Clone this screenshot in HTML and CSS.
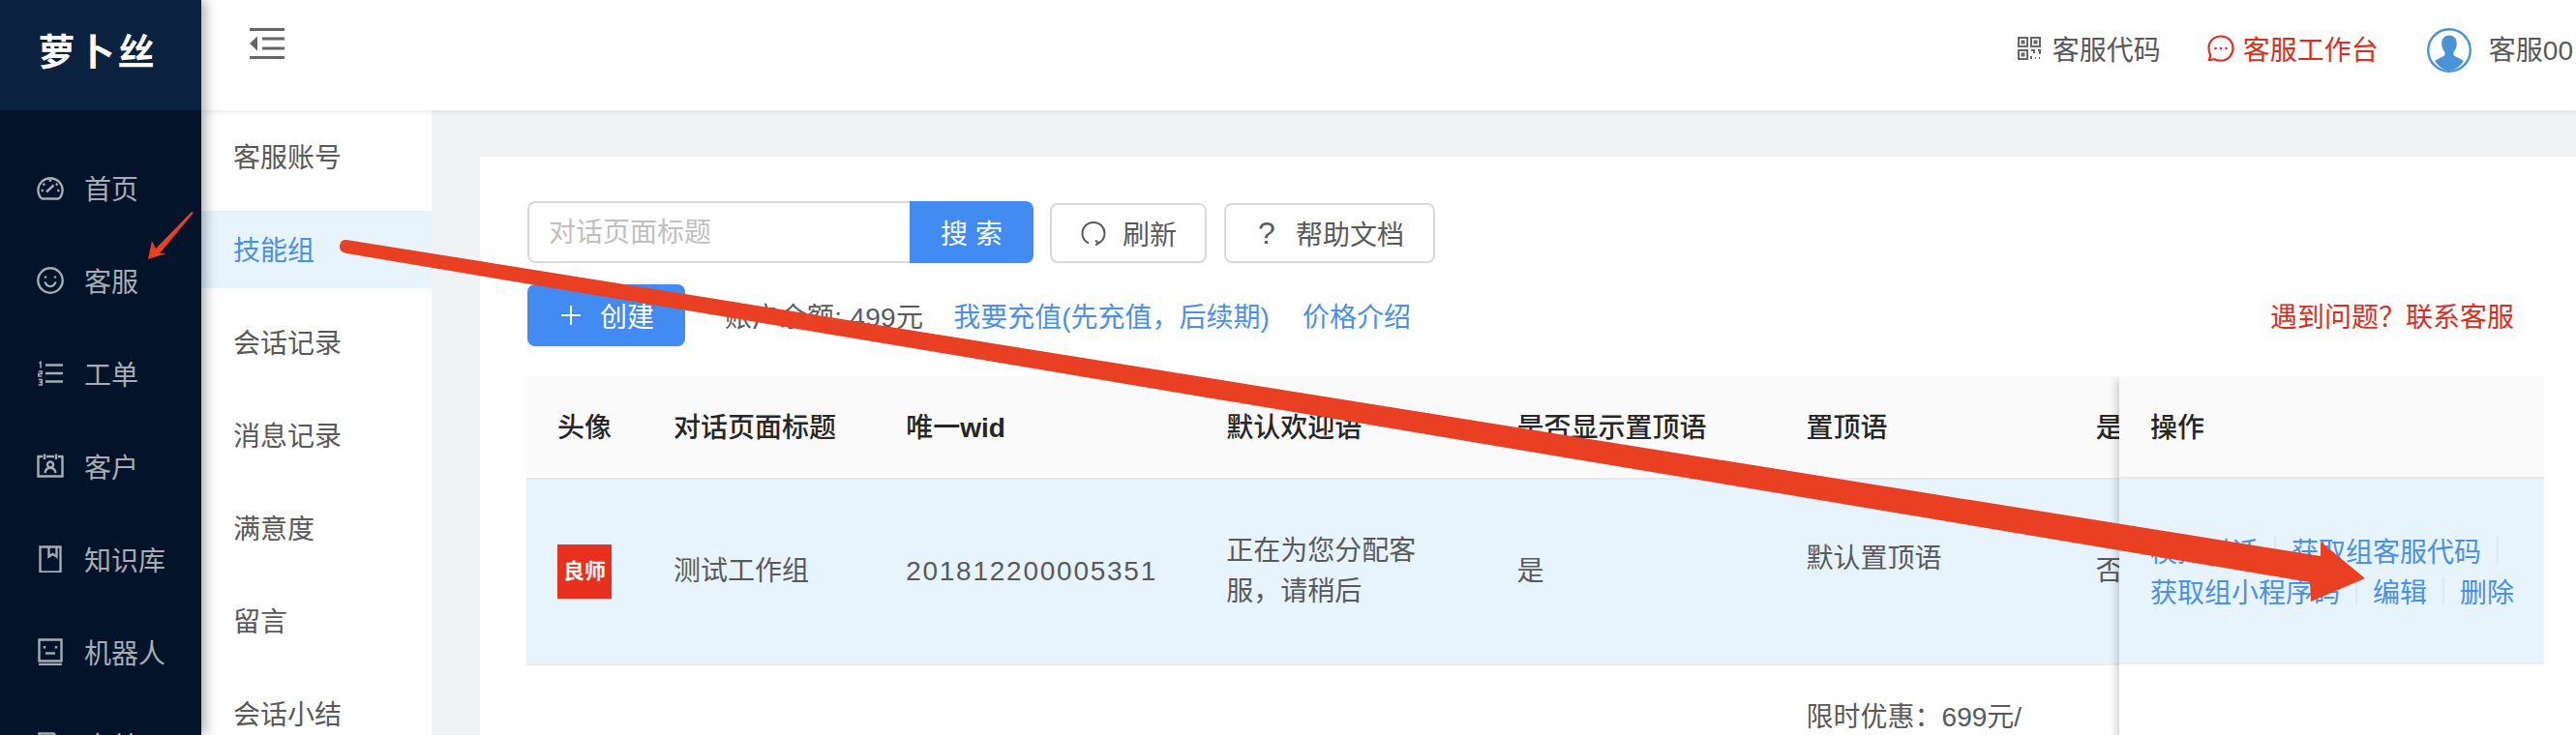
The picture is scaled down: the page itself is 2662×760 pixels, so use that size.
FILE: index.html
```html
<!DOCTYPE html>
<html lang="zh-CN">
<head>
    <meta charset="UTF-8">
    <title>萝卜丝 - 技能组</title>
    <link rel="stylesheet" href="styles.css">
</head>
<body>

    <!-- Main menu -->
    <aside class="sider">
        <div class="logo">萝卜丝</div>
        <nav class="menu">
            <a class="menu-item">
                <svg class="menu-icon" viewBox="0 0 28 28"><path d="M6 25.5h16a3 3 0 0 0 2.2-1.3A12.6 12.6 0 1 0 3.8 24.2 3 3 0 0 0 6 25.5z"/><path d="M10 18.5l7.5-7"/><path d="M14 5.5v2.2M6.5 10l1.8 1.3M4.6 17h2.2M21.5 10l-1.8 1.3M23.4 17h-2.2"/></svg>
                <span>首页</span>
            </a>
            <a class="menu-item">
                <svg class="menu-icon" viewBox="0 0 28 28"><circle cx="14" cy="14" r="12.7"/><path d="M8.5 15.5c1 3.2 3.2 4.6 5.5 4.6s4.500-1.400 5.500-4.600"/><path d="M9 9.500v2M19 9.500v2"/></svg>
                <span>客服</span>
            </a>
            <a class="menu-item">
                <svg class="menu-icon" viewBox="0 0 28 28"><path d="M9 5.500h18M9 14h18M9 22.500h18"/><path class="icon-thin" d="M2.500 3.500l1.500-1v6M1.800 12h3.400v2.500H1.800V17h3.400M1.800 20.500h3.400v5.500H1.800M2.500 23.200h2.700"/></svg>
                <span>工单</span>
            </a>
            <a class="menu-item">
                <svg class="menu-icon" viewBox="0 0 28 28"><path d="M6 4H1.500v20.500h25V4H22M10 4h8"/><path d="M8 1.500V7M20 1.500V7"/><circle cx="14" cy="12.500" r="3"/><path d="M8.500 21c.6-3.500 2.700-5.200 5.500-5.200s4.900 1.700 5.500 5.200"/></svg>
                <span>客户</span>
            </a>
            <a class="menu-item">
                <svg class="menu-icon" viewBox="0 0 28 28"><path d="M3.500 1.500h21v26h-21z"/><path d="M12.500 1.500v10l4-2.500 4 2.500v-10"/></svg>
                <span>知识库</span>
            </a>
            <a class="menu-item">
                <svg class="menu-icon" viewBox="0 0 28 28"><path d="M2.500 1.500h23v22h-23z"/><path d="M2 27h24"/><path d="M9 15.500h10"/><path d="M8 8v2.500M20 8v2.500"/></svg>
                <span>机器人</span>
            </a>
            <a class="menu-item">
                <svg class="menu-icon" viewBox="0 0 28 28"><path d="M2.500 27V2.500h15l3 4h5V27z"/></svg>
                <span>商单</span>
            </a>
        </nav>
    </aside>

    <div class="main">
        <!-- Top bar -->
        <header class="topbar">
            <svg class="fold-icon" viewBox="0 0 36 32"><path d="M0 1.500h36M13 11h23M13 21h23M0 30.500h36"/><path class="fold-arrow" d="M8 8.500v15L0 16z"/></svg>
            <div class="top-actions">
                <a class="top-link">
                    <svg class="qr-icon" viewBox="0 0 24 24"><path d="M1 1h9v9H1zM14 1h9v9h-9zM1 14h9v9H1z"/><path d="M4.500 4.500h2v2h-2zM17.500 4.500h2v2h-2zM4.500 17.500h2v2h-2z"/><path d="M14 14h3v3M21 14h2v4M14 20v3M18 22h1M22 22h1"/></svg>
                    <span>客服代码</span>
                </a>
                <a class="top-link top-link-red">
                    <svg class="chat-icon" viewBox="0 0 28 28"><path d="M14 1.500C6.800 1.500 1.500 6.900 1.500 13.800c0 2.700.7 4.900 1.400 6.500.6 1.500-.3 3.500-.9 5.500 2.200.4 3.900-.4 5.300-.6 1.800.9 4.100 1.400 6.700 1.400 7 0 12.500-5.600 12.500-12.800S21 1.500 14 1.500z"/><circle class="dot" cx="8.500" cy="14" r="1.300"/><circle class="dot" cx="14" cy="14" r="1.300"/><circle class="dot" cx="19.500" cy="14" r="1.300"/></svg>
                    <span>客服工作台</span>
                </a>
                <a class="top-link top-user">
                    <svg class="user-avatar" viewBox="0 0 46 46"><circle class="ring" cx="23" cy="23" r="21.800"/><path class="bust" d="M23 7.500c-5 0-7.800 3.700-7.800 8.500 0 3.200 1 6.200 2.800 8.300.8 1 .8 3-.2 4.200-1.600 1.600-6.300 3-9.700 5.600C12.500 40.500 17.500 44 23 44s10.500-3.500 14.900-9.900c-3.400-2.600-8.100-4-9.700-5.600-1-1.200-1-3.200-.2-4.200 1.800-2.100 2.800-5.100 2.800-8.300 0-4.800-2.800-8.500-7.800-8.500z"/></svg>
                    <span>客服00</span>
                </a>
            </div>
        </header>

        <div class="body">
            <!-- Sub menu -->
            <nav class="subnav">
                <a class="subnav-item">客服账号</a>
                <a class="subnav-item subnav-item-active">技能组</a>
                <a class="subnav-item">会话记录</a>
                <a class="subnav-item">消息记录</a>
                <a class="subnav-item">满意度</a>
                <a class="subnav-item">留言</a>
                <a class="subnav-item">会话小结</a>
            </nav>

            <div class="content">
                <section class="card">
                    <div class="toolbar">
                        <div class="search">
                            <input class="search-input" type="text" placeholder="对话页面标题">
                            <button class="search-button" type="button">搜 索</button>
                        </div>
                        <button class="btn btn-refresh" type="button">
                            <svg class="btn-icon" viewBox="0 0 26 26"><path d="M8 23.500C4 21.500 1.500 17.800 1.500 13.500 1.500 7 6.500 2 13 2s11.500 5 11.500 11.500c0 4.300-2.500 8-6.500 10"/><path d="M15 20.500l3 3-3 2"/></svg>
                            <span>刷新</span>
                        </button>
                        <button class="btn btn-help" type="button">
                            <span class="help-mark">?</span>
                            <span>帮助文档</span>
                        </button>
                    </div>

                    <div class="toolbar-second">
                        <button class="btn-create" type="button">
                            <svg class="plus-icon" viewBox="0 0 20 20"><path d="M10 0v20M0 10h20"/></svg>
                            <span>创建</span>
                        </button>
                        <span class="balance">账户余额: 499元</span>
                        <a class="link link-recharge">我要充值(先充值，后续期)</a>
                        <a class="link link-price">价格介绍</a>
                        <a class="link-help">遇到问题？联系客服</a>
                    </div>

                    <div class="table-wrap">
                        <table class="data-table">
                            <colgroup>
                                <col class="col-avatar">
                                <col class="col-title">
                                <col class="col-wid">
                                <col class="col-welcome">
                                <col class="col-show">
                                <col class="col-top">
                                <col class="col-last">
                            </colgroup>
                            <thead>
                                <tr>
                                    <th>头像</th>
                                    <th>对话页面标题</th>
                                    <th>唯一<b>wid</b></th>
                                    <th>默认欢迎语</th>
                                    <th>是否显示置顶语</th>
                                    <th>置顶语</th>
                                    <th>是否</th>
                                </tr>
                            </thead>
                            <tbody>
                                <tr class="row-selected">
                                    <td><div class="group-avatar">良师</div></td>
                                    <td>测试工作组</td>
                                    <td class="num">201812200005351</td>
                                    <td>正在为您分配客服，请稍后</td>
                                    <td>是</td>
                                    <td><div class="top-text">默认置顶语</div></td>
                                    <td>否</td>
                                </tr>
                                <tr class="row-next">
                                    <td></td>
                                    <td></td>
                                    <td></td>
                                    <td></td>
                                    <td></td>
                                    <td>限时优惠：699元/</td>
                                    <td></td>
                                </tr>
                            </tbody>
                        </table>

                        <!-- Fixed column -->
                        <div class="fixed-col">
                            <div class="fixed-head">操作</div>
                            <div class="fixed-row">
                                <div class="action-line">
                                    <a>模拟对话</a><i class="divider"></i><a>获取组客服代码</a><i class="divider"></i>
                                </div>
                                <div class="action-line">
                                    <a>获取组小程序码</a><i class="divider"></i><a>编辑</a><i class="divider"></i><a>删除</a>
                                </div>
                            </div>
                        </div>
                    </div>
                </section>
            </div>
        </div>
    </div>

    <!-- Red arrows drawn on top of the screenshot -->
    <svg class="markup" viewBox="0 0 2662 760">
        <path d="M358 248 L2398 575 L2398 560 L2444 598 L2388 622 L2387 602 L358 262 Q350 260 351 254 Q352 247 358 248z"/>
        <path d="M200 220 L165 262 L172 262 L153 268 L157 249 L161 257 L198 219z"/>
    </svg>

</body>
</html>
```

FILE: styles.css
```css
/* --- General Setup --- */
:root {
    --primary-color: #418bf3;
    --link-color: #4a8fe9;
    --red-color: #dc2e20;
    --border-color: #d9d9d9;
    --selected-color: #e7f4fe;
}

html, body {
    margin: 0;
    height: 760px;
    overflow: hidden;
}

body {
    position: relative;
    display: flex;
    font-family: "Liberation Sans", "Noto Sans CJK SC", sans-serif;
    font-size: 28px;
    color: #595959;
    background-color: #f0f2f5;
}

/* --- Main Menu --- */
.sider {
    flex: none;
    width: 208px;
    background-color: #031329;
    box-shadow: 4px 0 12px rgba(0, 21, 41, 0.35);
    position: relative;
    z-index: 2;
}

.logo {
    height: 114px;
    box-sizing: border-box;
    padding: 0 6px 14px 0;
    display: flex;
    align-items: center;
    justify-content: center;
    background-color: #0a2140;
    color: #fff;
    font-size: 38px;
    font-weight: 700;
    letter-spacing: 3px;
}

.menu {
    padding-top: 32px;
}

.menu-item {
    height: 96px;
    display: flex;
    align-items: center;
    gap: 21px;
    padding-left: 38px;
    color: #a6adb6;
}

.menu-icon {
    width: 28px;
    height: 28px;
    fill: none;
    stroke: #a6adb6;
    stroke-width: 2.4;
}

.icon-thin {
    stroke-width: 1.6;
}

/* --- Top Bar --- */
.main {
    flex: 1;
    min-width: 0;
    display: flex;
    flex-direction: column;
}

.topbar {
    flex: none;
    height: 114px;
    display: flex;
    align-items: center;
    justify-content: space-between;
    padding-left: 50px;
    background-color: #fff;
    box-shadow: 0 2px 6px rgba(0, 21, 41, 0.08);
    position: relative;
    z-index: 1;
}

.fold-icon {
    width: 36px;
    height: 32px;
    margin-top: -24px;
    fill: none;
    stroke: #666;
    stroke-width: 3;
}

.fold-arrow {
    fill: #666;
    stroke: none;
}

.top-actions {
    display: flex;
    align-items: center;
    margin: 0 3px 14px 0;
}

.top-link {
    display: flex;
    align-items: center;
    white-space: nowrap;
}

.top-link-red {
    margin-left: 48px;
    color: var(--red-color);
}

.top-user {
    margin-left: 50px;
}

.qr-icon {
    width: 24px;
    height: 24px;
    margin-right: 12px;
    fill: none;
    stroke: #666;
    stroke-width: 2;
}

.chat-icon {
    width: 28px;
    height: 28px;
    margin-right: 9px;
    fill: none;
    stroke: var(--red-color);
    stroke-width: 2.2;
}

.dot {
    fill: var(--red-color);
    stroke: none;
}

.user-avatar {
    width: 46px;
    height: 46px;
    margin: 4px 18px 0 0;
}

.ring {
    fill: #fff;
    stroke: #4a93d6;
    stroke-width: 2.4;
}

.bust {
    fill: #4a93d6;
}

/* --- Sub Menu --- */
.body {
    flex: 1;
    display: flex;
    min-height: 0;
}

.subnav {
    flex: none;
    width: 238px;
    padding-top: 8px;
    background-color: #fff;
}

.subnav-item {
    height: 80px;
    box-sizing: border-box;
    margin-bottom: 16px;
    display: flex;
    align-items: center;
    padding: 0 0 2px 33px;
}

.subnav-item-active {
    background-color: var(--selected-color);
    color: var(--link-color);
}

/* --- Content Card --- */
.content {
    flex: 1;
    min-width: 0;
    padding: 48px 0 0 50px;
}

.card {
    height: 100%;
    box-sizing: border-box;
    padding: 46px 33px 0 48px;
    background-color: #fff;
}

.toolbar {
    display: flex;
    align-items: center;
    gap: 18px;
    margin-left: 1px;
}

.search {
    display: flex;
    height: 64px;
    margin-right: -1px;
}

.search-input {
    width: 395px;
    box-sizing: border-box;
    padding: 2px 20px 0;
    border: 2px solid var(--border-color);
    border-right: none;
    border-radius: 8px 0 0 8px;
    outline: none;
    font-family: inherit;
    font-size: 28px;
}

.search-input::placeholder {
    color: #bfbfbf;
}

.search-button {
    width: 128px;
    border: none;
    border-radius: 0 8px 8px 0;
    background-color: var(--primary-color);
    color: #fff;
    font-family: inherit;
    font-size: 28px;
    box-shadow: 0 2px 0 rgba(0, 0, 0, 0.04);
}

.btn {
    height: 62px;
    margin-top: 2px;
    display: flex;
    align-items: center;
    box-sizing: border-box;
    border: 2px solid var(--border-color);
    border-radius: 8px;
    background-color: #fff;
    color: #595959;
    font-family: inherit;
    font-size: 28px;
    box-shadow: 0 2px 0 rgba(0, 0, 0, 0.015);
}

.btn-refresh {
    width: 162px;
    padding-left: 30px;
}

.btn-help {
    width: 218px;
    padding-left: 32px;
}

.btn-icon {
    width: 26px;
    height: 26px;
    margin-right: 17px;
    fill: none;
    stroke: #595959;
    stroke-width: 2;
}

.help-mark {
    width: 20px;
    margin-right: 20px;
    font-size: 32px;
    text-align: center;
}

.toolbar-second {
    display: flex;
    align-items: center;
    margin: 22px 0 0 1px;
    padding-right: 31px;
}

.btn-create {
    width: 163px;
    height: 64px;
    display: flex;
    align-items: center;
    padding: 0 0 0 35px;
    border: none;
    border-radius: 8px;
    background-color: var(--primary-color);
    color: #fff;
    font-family: inherit;
    font-size: 28px;
    box-shadow: 0 2px 0 rgba(0, 0, 0, 0.04);
}

.plus-icon {
    width: 20px;
    height: 20px;
    margin-right: 20px;
    fill: none;
    stroke: #fff;
    stroke-width: 2;
}

.balance {
    margin-left: 41px;
    letter-spacing: 0.3px;
}

.link {
    color: var(--link-color);
}

.link-recharge {
    margin-left: 31px;
}

.link-price {
    margin-left: 34px;
}

.link-help {
    margin-left: auto;
    color: var(--red-color);
}

/* --- Table --- */
.table-wrap {
    position: relative;
    height: 400px;
    margin-top: 31px;
    overflow: hidden;
}

.data-table {
    width: 2090px;
    table-layout: fixed;
    border-collapse: collapse;
}

.col-avatar { width: 120px; }
.col-title { width: 240px; }
.col-wid { width: 331px; }
.col-welcome { width: 300px; }
.col-show { width: 299px; }
.col-top { width: 299px; }
.col-last { width: 500px; }

.data-table th {
    height: 106px;
    padding: 0 32px 3px;
    box-sizing: border-box;
    background-color: #fafafa;
    border-bottom: 2px solid #e8e8e8;
    color: #262626;
    font-weight: 500;
    text-align: left;
    white-space: nowrap;
}

.data-table td {
    padding: 0 32px;
    line-height: 42px;
}

.row-selected td {
    height: 192px;
    box-sizing: border-box;
    background-color: var(--selected-color);
    border-bottom: 2px solid #e8eef2;
}

.row-next td {
    height: 120px;
    padding-top: 33px;
    vertical-align: top;
    white-space: nowrap;
}

.num {
    letter-spacing: 1.75px;
}

.group-avatar {
    width: 56px;
    height: 56px;
    display: flex;
    align-items: center;
    justify-content: center;
    background-color: #e8301f;
    color: #fff;
    font-size: 22px;
    font-weight: 700;
}

.top-text {
    padding-bottom: 26px;
}

/* --- Fixed Operations Column --- */
.fixed-col {
    position: absolute;
    top: 0;
    right: 0;
    bottom: 0;
    width: 439px;
    background-color: #fff;
    box-shadow: -6px 0 8px -3px rgba(0, 0, 0, 0.18);
}

.fixed-head {
    height: 106px;
    display: flex;
    align-items: center;
    box-sizing: border-box;
    padding: 0 0 3px 32px;
    background-color: #fafafa;
    border-bottom: 2px solid #e8e8e8;
    color: #262626;
    font-weight: 500;
}

.fixed-row {
    height: 192px;
    display: flex;
    flex-direction: column;
    justify-content: center;
    box-sizing: border-box;
    padding-left: 32px;
    background-color: var(--selected-color);
    border-bottom: 2px solid #e8eef2;
}

.action-line {
    display: flex;
    align-items: center;
    height: 42px;
    color: var(--link-color);
    white-space: nowrap;
}

.divider {
    width: 2px;
    height: 28px;
    margin: 0 16px;
    background-color: #dfe6ec;
}

/* --- Red Markup Arrows --- */
.markup {
    position: absolute;
    top: 0;
    left: 0;
    width: 2662px;
    height: 760px;
    z-index: 5;
    pointer-events: none;
    fill: #e93f22;
}
```
